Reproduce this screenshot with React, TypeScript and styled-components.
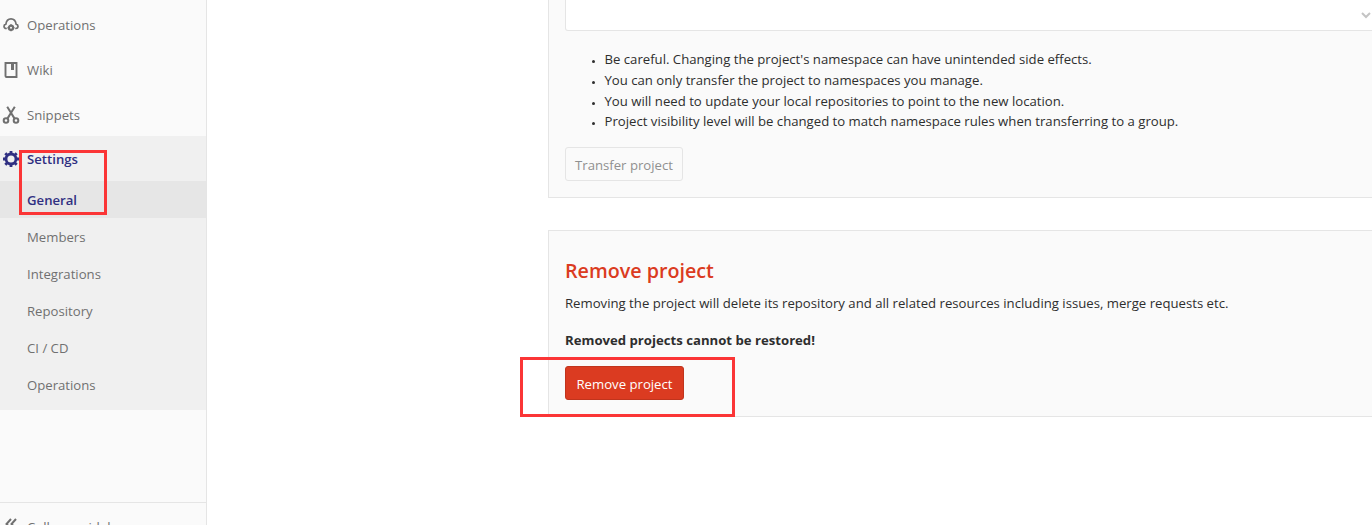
import React from 'react'
import styled, { createGlobalStyle } from 'styled-components'

const GlobalStyle = createGlobalStyle`
  html, body {
    margin: 0;
    padding: 0;
    height: 525px;
    overflow: hidden;
    background: #fff;
    font-family: "Open Sans", "Noto Sans", sans-serif;
    font-size: 13.16px;
    color: #2e2e2e;
  }
`

const SPage = styled.div`
  position: relative;
  display: flex;
  width: 1372px;
  height: 525px;
  overflow: hidden;
`

const SSidebar = styled.aside`
  display: flex;
  flex-direction: column;
  flex: 0 0 207px;
  box-sizing: border-box;
  height: 525px;
  padding-top: 1px;
  background: #fafafa;
  border-right: 1px solid #e5e5e5;
`

const SNav = styled.nav`
  flex: 1;
`

const SNavRow = styled.div<{ $active?: boolean }>`
  display: flex;
  align-items: center;
  box-sizing: border-box;
  height: 45px;
  padding: ${(p) => (p.$active ? '0' : '3px 0 0')};
  color: ${(p) => (p.$active ? '#303082' : '#707070')};
  font-weight: ${(p) => (p.$active ? 600 : 400)};
`

const SIconSlot = styled.span`
  display: flex;
  justify-content: center;
  flex: 0 0 27px;
  padding-right: 5px;
  box-sizing: border-box;
`

const SSettingsGroup = styled.div`
  padding-bottom: 7px;
  background: #f0f0f0;
`

const SSubRow = styled.div<{ $active?: boolean }>`
  display: flex;
  align-items: center;
  height: 37px;
  padding-left: 27px;
  background: ${(p) => (p.$active ? '#e6e6e6' : 'transparent')};
  color: ${(p) => (p.$active ? '#303082' : '#707070')};
  font-weight: ${(p) => (p.$active ? 600 : 400)};
`

const SCollapse = styled.div`
  display: flex;
  align-items: flex-start;
  flex: 0 0 23px;
  box-sizing: border-box;
  padding-top: 15px;
  overflow: hidden;
  border-top: 1px solid #e5e5e5;
  line-height: 18px;
  color: #707070;
`

const SMain = styled.main`
  flex: 1;
  min-width: 0;
  overflow: hidden;
  padding-left: 341px;
`

const SPanel = styled.section<{ $clipped?: boolean }>`
  box-sizing: border-box;
  width: 900px;
  padding: 0 16px 16px;
  margin-bottom: 32px;
  background: #fafafa;
  border: 1px solid #e5e5e5;
  border-top-width: ${(p) => (p.$clipped ? 0 : 1)}px;
`

const SSelect = styled.div`
  display: flex;
  justify-content: flex-end;
  align-items: center;
  box-sizing: border-box;
  height: 31px;
  padding: 0 59px 0 0;
  background: #fff;
  border: 1px solid #e5e5e5;
  border-top: 0;
  border-radius: 0 0 3px 3px;
`

const SList = styled.ul`
  margin: 18.4px 0 15.6px;
  padding: 0 0 0 39.5px;
  line-height: 20.6px;

  li::marker {
    font-size: 9px;
  }
`

const SButton = styled.div<{ $danger?: boolean }>`
  display: flex;
  align-items: center;
  justify-content: center;
  box-sizing: border-box;
  width: ${(p) => (p.$danger ? 119 : 118)}px;
  height: 34px;
  padding-top: 1px;
  border-radius: 3px;
  border: 1px solid ${(p) => (p.$danger ? '#c0341d' : '#e5e5e5')};
  background: ${(p) => (p.$danger ? '#db3b21' : '#fafafa')};
  color: ${(p) => (p.$danger ? '#fff' : '#909090')};
`

const SHeading = styled.h4`
  margin: 26px 0 0;
  font-size: 19.7px;
  line-height: 28px;
  font-weight: 600;
  color: #db3b21;
`

const SText = styled.p<{ $bold?: boolean }>`
  margin: 8px 0 0;
  line-height: 20px;
  font-weight: ${(p) => (p.$bold ? 700 : 400)};
  & + & {
    margin-top: 17px;
  }
`

const SDangerAction = styled.div`
  margin-top: 16px;
`

const SMarker = styled.div<{ $x: number; $y: number; $w: number; $h: number }>`
  position: absolute;
  left: ${(p) => p.$x}px;
  top: ${(p) => p.$y}px;
  width: ${(p) => p.$w}px;
  height: ${(p) => p.$h}px;
  box-sizing: border-box;
  border: 3px solid #fb3536;
`

const CloudIcon = () => (
  <svg width="16" height="16" viewBox="0 0 16 16" fill="none" stroke="#707070" strokeWidth="1.7">
    <path d="M3.800 11.500H3.200C1.900 11.500 1 10.500 1 9.300c0-1.100.8-2 1.900-2.200C3.300 3.800 5.400 1.800 8 1.800s4.700 2 5.100 5.300c1.100.2 1.900 1.100 1.900 2.200 0 1.200-.9 2.200-2.200 2.200h-.6" />
    <circle cx="8" cy="10.800" r="2.100" strokeWidth="2.200" />
    <path d="M8 7.300v1.200M8 13.100v1.200M4.500 10.800h1.200M10.300 10.800h1.200" strokeWidth="1.400" />
  </svg>
)

const WikiIcon = () => (
  <svg width="16" height="16" viewBox="0 0 16 16" fill="none" stroke="#707070" strokeWidth="1.900">
    <path d="M2.500 1h11v14H3.500a1 1 0 0 1-1-1z" />
    <path d="M9.500 1v7" strokeWidth="3" />
  </svg>
)

const ScissorsIcon = () => (
  <svg width="18" height="18" viewBox="0 0 18 18" fill="none" stroke="#707070" strokeWidth="2">
    <circle cx="4" cy="14.500" r="2.300" />
    <circle cx="14" cy="14.500" r="2.300" />
    <path d="M5.400 12.600 12.800.8M12.600 12.600 5.200.8" />
  </svg>
)

const GearIcon = () => (
  <svg width="18" height="18" viewBox="0 0 18 18" fill="none" stroke="#303082">
    <circle cx="9" cy="9" r="5" strokeWidth="2.800" />
    <path
      d="M9 1v3M9 14v3M1 9h3M14 9h3M3.300 3.300l2.200 2.200M12.500 12.500l2.200 2.200M3.300 14.700l2.200-2.200M12.500 5.500l2.200-2.200"
      strokeWidth="2.800"
    />
  </svg>
)

const ChevronIcon = () => (
  <svg width="10" height="7" viewBox="0 0 10 7" fill="none" stroke="#c4c4c4" strokeWidth="2">
    <path d="M1 1l4 4 4-4" />
  </svg>
)

const CollapseIcon = () => (
  <svg width="12" height="12" viewBox="0 0 12 12" fill="none" stroke="#707070" strokeWidth="2">
    <path d="M6 1 1.500 6 6 11M11 1 6.500 6 11 11" />
  </svg>
)

const subItems = ['General', 'Members', 'Integrations', 'Repository', 'CI / CD', 'Operations']

const transferNotes = [
  "Be careful. Changing the project's namespace can have unintended side effects.",
  'You can only transfer the project to namespaces you manage.',
  'You will need to update your local repositories to point to the new location.',
  'Project visibility level will be changed to match namespace rules when transferring to a group.',
]

const App = () => {
  return (
    <SPage>
      <GlobalStyle />
      <SSidebar>
        <SNav>
          <SNavRow>
            <SIconSlot><CloudIcon /></SIconSlot>
            Operations
          </SNavRow>
          <SNavRow>
            <SIconSlot><WikiIcon /></SIconSlot>
            Wiki
          </SNavRow>
          <SNavRow>
            <SIconSlot><ScissorsIcon /></SIconSlot>
            Snippets
          </SNavRow>
          <SSettingsGroup>
            <SNavRow $active>
              <SIconSlot><GearIcon /></SIconSlot>
              Settings
            </SNavRow>
            {subItems.map((item, i) => (
              <SSubRow key={item} $active={i === 0}>{item}</SSubRow>
            ))}
          </SSettingsGroup>
        </SNav>
        <SCollapse>
          <SIconSlot><CollapseIcon /></SIconSlot>
          Collapse sidebar
        </SCollapse>
      </SSidebar>
      <SMain>
        <SPanel $clipped>
          <SSelect><ChevronIcon /></SSelect>
          <SList>
            {transferNotes.map((note) => (
              <li key={note}>{note}</li>
            ))}
          </SList>
          <SButton>Transfer project</SButton>
        </SPanel>
        <SPanel>
          <SHeading>Remove project</SHeading>
          <SText>Removing the project will delete its repository and all related resources including issues, merge requests etc.</SText>
          <SText $bold>Removed projects cannot be restored!</SText>
          <SDangerAction>
            <SButton $danger>Remove project</SButton>
          </SDangerAction>
        </SPanel>
      </SMain>
      <SMarker $x={19} $y={150} $w={88} $h={65} />
      <SMarker $x={520} $y={357} $w={215} $h={60} />
    </SPage>
  )
}

export default App
